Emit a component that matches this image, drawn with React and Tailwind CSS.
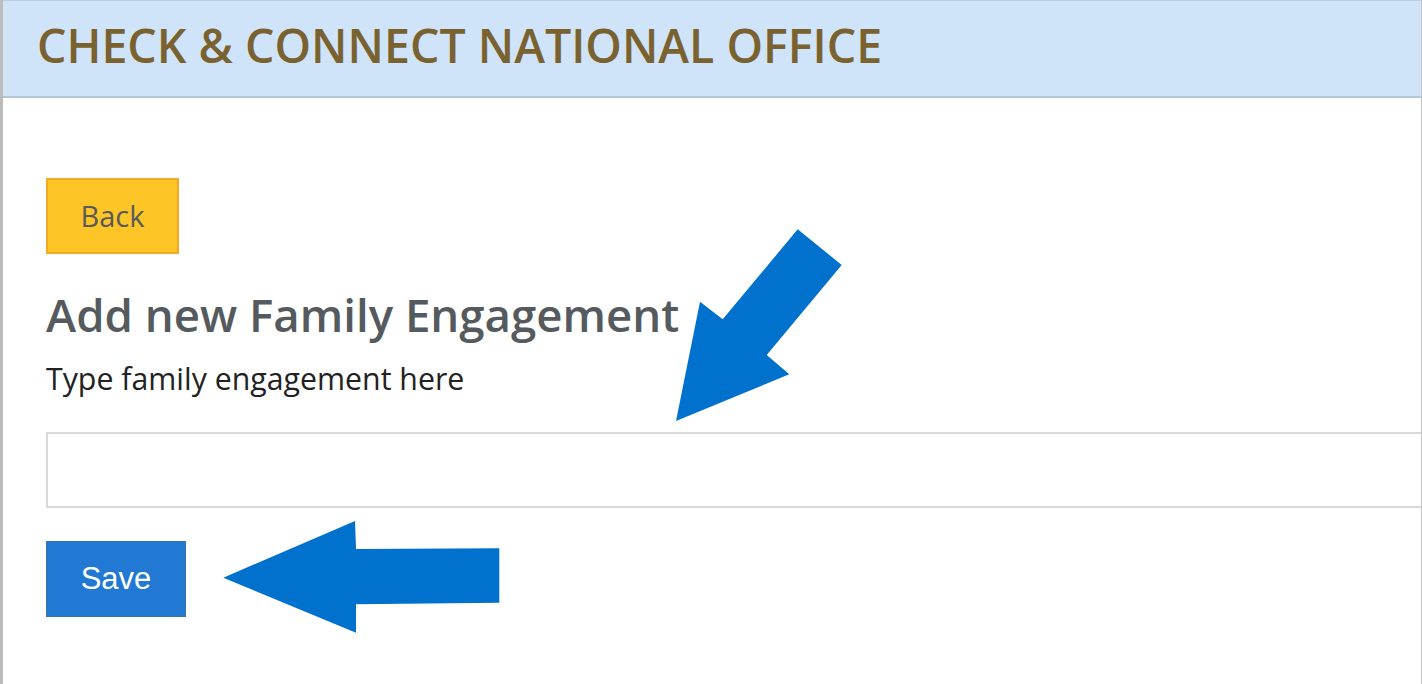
export default function App() {
  return (
    <div className="relative h-[684px] w-full overflow-hidden bg-white border-l-[3px] border-l-[#bcbcbc] border-r border-r-[#c4c4c4]" style={{ fontFamily: '"Open Sans", "Noto Sans", sans-serif' }}>
      <header className="h-[98px] bg-[#cfe4f8] border-t border-t-[#bccfe2] border-b-2 border-b-[#b3c7db] flex items-center pl-[34px]">
        <h1 className="text-[46.5px] font-semibold text-[#7a6230] leading-none -mt-[6px]">CHECK &amp; CONNECT NATIONAL OFFICE</h1>
      </header>
      <main className="pl-[43px]">
        <button className="mt-[80px] w-[133px] h-[76px] bg-[#fdc626] border-2 border-[#f6a824] text-[#5a5a5a] text-[29px] flex items-center justify-center">Back</button>
        <h2 className="mt-[30px] text-[45.6px] font-semibold text-[#555a5e] leading-[60px]">Add new Family Engagement</h2>
        <p className="mt-[15px] text-[30.3px] text-[#222222] leading-[40px]">Type family engagement here</p>
        <input type="text" className="block mt-[33px] w-[1400px] h-[76px] border-2 border-[#d9d9d9] outline-none" />
        <button className="mt-[33px] w-[140px] h-[76px] bg-[#2179d3] border border-[#3a72ad] text-white text-[31px] flex items-center justify-center" style={{ fontFamily: '"Liberation Sans", Arial, sans-serif' }}>Save</button>
      </main>
      <svg className="absolute top-0 -left-[3px] pointer-events-none" width="1422" height="684" viewBox="0 0 1422 684">
        <polygon fill="#0071cd" points="797.7,229.3 841.7,265 766.7,355 789.3,374.3 676,421 700,301.7 722.7,319.3" />
        <polygon fill="#0071cd" points="223.3,577.7 355,521 356,549 499.3,548.3 499.3,602.7 356,604.3 356,632.7" />
      </svg>
    </div>
  );
}
